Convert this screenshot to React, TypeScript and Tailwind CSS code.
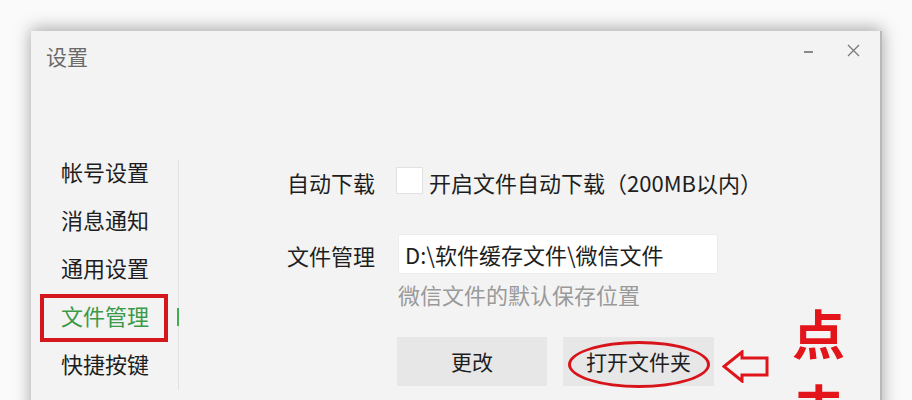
import React from 'react'

const navItems = ['帐号设置', '消息通知', '通用设置', '文件管理', '快捷按键']

export default function App() {
  return (
    <div
      className="h-[400px] w-[912px] overflow-hidden bg-[#fafafb] pt-[31px] pl-[31px]"
      style={{ fontFamily: '"Noto Sans CJK SC", "Noto Sans", sans-serif' }}
    >
      <div className="relative h-[420px] w-[851px] border-r-2 border-[#b9b9b9] bg-[#f3f3f3] shadow-[0_-2px_16px_rgba(0,0,0,0.35)]">
        {/* title bar */}
        <div className="flex h-[119px] items-start justify-between">
          <div className="pl-[15px] pt-[13px] text-[21px] leading-[24px] text-[#6a6a6a]">设置</div>
          <div className="flex items-start gap-[34px] pr-[20px] pt-[13px]">
            <div className="mt-[7px] h-[2px] w-[9px] bg-[#8a8a8a]" />
            <svg width="13" height="13" viewBox="0 0 13 13">
              <path d="M1 1 L12 12 M12 1 L1 12" stroke="#7a7a7a" strokeWidth="1.3" fill="none" />
            </svg>
          </div>
        </div>

        <div className="flex">
          {/* sidebar */}
          <div className="w-[147px]">
            {navItems.map(item => (
              <div
                key={item}
                className={
                  item === '文件管理'
                    ? 'ml-[9px] flex h-12 w-[128px] items-center border-4 border-[#d4161d] pb-[5px] pl-[17px] text-[22px] text-[#3a9a48]'
                    : 'ml-[9px] flex h-12 w-[128px] items-center border-4 border-transparent pb-[5px] pl-[17px] text-[22px] text-[#1e1e1e]'
                }
              >
                {item}
              </div>
            ))}
          </div>

          <div className="relative mt-[10px] w-px self-stretch bg-[#e2e2e2]">
            <div className="absolute left-[-1px] top-[148px] h-[18px] w-[2px] bg-[#3fae4c]" />
          </div>

          {/* content */}
          <div className="pl-[108px] pt-[15px]">
            <div className="flex items-center">
              <div className="w-[109px] pt-[4px] text-[22px] leading-[27px] text-[#1e1e1e]">自动下载</div>
              <div className="h-[27px] w-[27px] border border-[#e2e2e2] bg-white" />
              <div className="ml-[6px] pt-[4px] text-[22px] leading-[27px] text-[#1e1e1e]">开启文件自动下载（200MB以内）</div>
            </div>

            <div className="mt-[38px] flex items-center">
              <div className="w-[111px] pt-[3px] text-[22px] leading-[27px] text-[#1e1e1e]">文件管理</div>
              <div className="flex h-[40px] w-[320px] items-center border border-[#ececec] bg-white pl-[6px] text-[22px] text-[#1e1e1e]">
                D:\软件缓存文件\微信文件
              </div>
            </div>

            <div className="ml-[111px] mt-[8px] text-[22px] leading-[24px] text-[#9a9a9a]">微信文件的默认保存位置</div>

            <div className="ml-[110px] mt-[31px] flex gap-[16px]">
              <div className="flex h-[49px] w-[150px] items-center justify-center bg-[#e7e7e7] text-[21px] text-[#1e1e1e]">更改</div>
              <div className="flex h-[49px] w-[151px] items-center justify-center bg-[#e7e7e7] text-[21px] text-[#1e1e1e]">打开文件夹</div>
            </div>
          </div>
        </div>

        {/* annotations */}
        <div className="absolute left-[537px] top-[310px] h-[47px] w-[142px] rounded-[50%] border-[3px] border-[#d8141b]" />
        <svg className="absolute left-[691px] top-[319px]" width="47" height="33" viewBox="0 0 47 33">
          <path d="M2 16.5 L20 2 L20 8 L45 8 L45 25 L20 25 L20 31 Z" stroke="#e0151c" strokeWidth="3" fill="none" strokeLinejoin="miter" />
        </svg>
        <div className="absolute left-[761px] top-[264px] text-[53px] font-bold leading-[75px] text-[#e3151b]">
          <div>点</div>
          <div>击</div>
        </div>
      </div>
    </div>
  )
}
